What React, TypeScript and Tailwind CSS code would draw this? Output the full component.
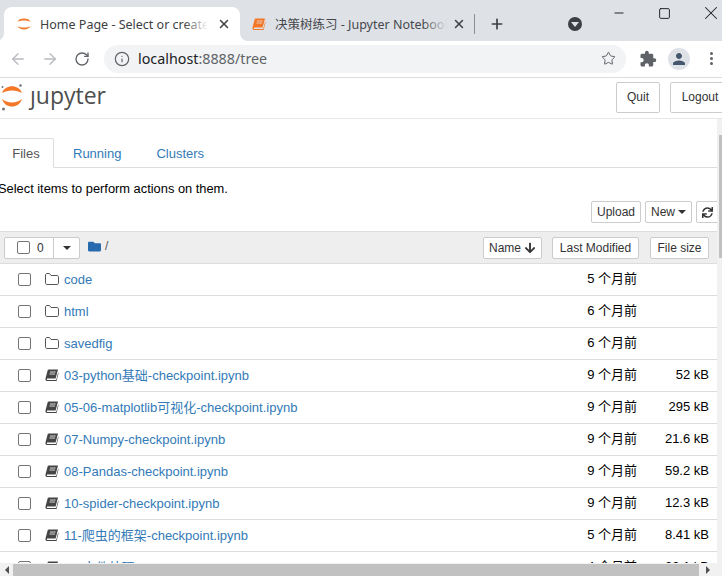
import React from 'react'
import { ArrowLeft, ArrowRight, RotateCw, Info, Star, X, Plus, Minus, Square } from 'lucide-react'
import { FaFolder, FaArrowDown, FaSync } from 'react-icons/fa'
import { MdExtension, MdPerson } from 'react-icons/md'

const CJK = "font-['Liberation_Sans','Noto_Sans_CJK_SC',sans-serif]"

type Row = { name: string, date: string, size?: string, folder?: boolean }

const rows: Row[] = [
    { name: 'code', date: '5 个月前', folder: true },
    { name: 'html', date: '6 个月前', folder: true },
    { name: 'savedfig', date: '6 个月前', folder: true },
    { name: '03-python基础-checkpoint.ipynb', date: '9 个月前', size: '52 kB' },
    { name: '05-06-matplotlib可视化-checkpoint.ipynb', date: '9 个月前', size: '295 kB' },
    { name: '07-Numpy-checkpoint.ipynb', date: '9 个月前', size: '21.6 kB' },
    { name: '08-Pandas-checkpoint.ipynb', date: '9 个月前', size: '59.2 kB' },
    { name: '10-spider-checkpoint.ipynb', date: '9 个月前', size: '12.3 kB' },
    { name: '11-爬虫的框架-checkpoint.ipynb', date: '5 个月前', size: '8.41 kB' },
    { name: '12-文件处理.ipynb', date: '4 个月前', size: '23.1 kB' },
]

function Favicon() {
    return (
        <svg width="16" height="16" viewBox="0 0 24 24" className="shrink-0">
            <path d="M2 9C5 2 19 2 22 9C18 6 6 6 2 9Z" fill="#f37726" />
            <path d="M2 15C5 22 19 22 22 15C18 18 6 18 2 15Z" fill="#f37726" />
        </svg>
    )
}

function NotebookIcon({ color = '#444', pageColor = '#fff' }: { color?: string, pageColor?: string }) {
    return (
        <svg width="14" height="13" viewBox="0 0 14 13" className="shrink-0">
            <path d="M3.6 0.5H13L10.6 9.6H2.4C1.6 9.6 1.5 10.9 2.3 10.9H11.2L13.2 3.4L13.6 4L11.6 11.9H2C0.7 11.9 0.2 10.7 0.5 9.4L2.6 1.6C2.8 0.9 3.1 0.5 3.6 0.5Z" fill={color} />
            <path d="M5 3H10.6M4.5 5H10" stroke={pageColor} strokeWidth="0.8" />
        </svg>
    )
}

function FolderIcon() {
    return (
        <svg width="14" height="12" viewBox="0 0 14 12" fill="none" stroke="#555" strokeWidth="1" className="mb-[2px]">
            <path d="M0.5 2C0.5 1.2 1 0.5 2 0.5H4.5L6 2.5H12C13 2.5 13.5 3.2 13.5 4V10C13.5 10.8 13 11.5 12 11.5H2C1 11.5 0.5 10.8 0.5 10Z" />
        </svg>
    )
}

function Btn({ children, className }: { children: React.ReactNode, className: string }) {
    return (
        <div className={`flex items-center justify-center bg-white border border-[#ccc] rounded-[2px] text-[12px] text-[#333] shrink-0 ${className}`}>
            {children}
        </div>
    )
}

function Tabstrip() {
    return (
        <div className="h-[41px] bg-[#dee1e6] flex items-end shrink-0 overflow-hidden font-['Noto_Sans','Noto_Sans_CJK_SC',sans-serif] text-[12.5px]">
            <div className="relative ml-[4px] w-[236px] h-[34px] shrink-0 bg-white rounded-t-[8px] flex items-center pl-[12px] text-[#3c4043]">
                <svg width="8" height="8" viewBox="0 0 8 8" className="absolute left-[-8px] bottom-0">
                    <path d="M8 0V8H0C4.4 8 8 4.4 8 0Z" fill="#fff" />
                </svg>
                <Favicon />
                <div className="relative ml-[8px] w-[168px] shrink-0 pt-[2px] overflow-hidden whitespace-nowrap">
                    Home Page - Select or create a notebook
                    <div className="absolute right-0 top-0 bottom-0 w-[24px] bg-gradient-to-r from-transparent to-white" />
                </div>
                <X size={14} strokeWidth={2.5} className="ml-[9px] shrink-0 text-[#3c4043]" />
                <svg width="8" height="8" viewBox="0 0 8 8" className="absolute right-[-8px] bottom-0">
                    <path d="M0 0V8H8C3.6 8 0 4.4 0 0Z" fill="#fff" />
                </svg>
            </div>
            <div className="w-[235px] h-[34px] shrink-0 flex items-center pl-[12px] text-[#45484c]">
                <NotebookIcon color="#f37726" pageColor="#dee1e6" />
                <div className="relative ml-[9px] w-[172px] shrink-0 pt-[2px] overflow-hidden whitespace-nowrap">
                    决策树练习 - Jupyter Notebook
                    <div className="absolute right-0 top-0 bottom-0 w-[24px] bg-gradient-to-r from-transparent to-[#dee1e6]" />
                </div>
                <X size={14} strokeWidth={2.5} className="ml-[5px] shrink-0 text-[#3c4043]" />
                <div className="ml-[8px] w-px h-[20px] shrink-0 bg-[#8a8d91]" />
            </div>
            <div className="h-[34px] flex items-center ml-[14px] shrink-0">
                <Plus size={16} strokeWidth={2.5} className="text-[#3c4043]" />
            </div>
            <div className="h-[34px] flex items-center ml-[63px] shrink-0">
                <div className="w-[14px] h-[14px] rounded-full bg-[#3c4043] flex items-center justify-center">
                    <div className="w-0 h-0 border-x-[4px] border-x-transparent border-t-[5px] border-t-[#dee1e6] mt-[1px]" />
                </div>
            </div>
            <div className="self-start flex items-center h-[26px] ml-[30px] shrink-0 text-[#222]">
                <Minus size={14} strokeWidth={1.7} className="shrink-0" />
                <Square size={13} strokeWidth={1.8} className="ml-[32px] shrink-0" />
                <X size={22} strokeWidth={1.1} className="ml-[29px] shrink-0" />
            </div>
        </div>
    )
}

function Toolbar() {
    return (
        <div className="h-[37px] bg-white border-b border-[#dadce0] flex items-center shrink-0 pb-[1px]">
            <ArrowLeft size={18} strokeWidth={1.8} className="ml-[9px] shrink-0 text-[#b9bbbe]" />
            <ArrowRight size={18} strokeWidth={1.8} className="ml-[14px] shrink-0 text-[#b9bbbe]" />
            <RotateCw size={16} strokeWidth={2} className="ml-[15px] shrink-0 text-[#5f6368]" />
            <div className="ml-[14px] w-[522px] h-[28px] shrink-0 rounded-full bg-[#f1f3f4] flex items-center pl-[10px] pr-[10px] font-['Noto_Sans',sans-serif] text-[14.3px]">
                <Info size={16} strokeWidth={1.8} className="text-[#5f6368]" />
                <span className="ml-[8px] text-[#202124]">localhost</span>
                <span className="text-[#5f6368]">:8888/tree</span>
                <Star size={15} strokeWidth={1.6} className="ml-auto text-[#5f6368]" />
            </div>
            <MdExtension size={18} className="ml-[13px] shrink-0 text-[#5f6368]" />
            <div className="ml-[11px] w-[22px] h-[22px] shrink-0 rounded-full bg-[#dee1e6] flex items-center justify-center">
                <MdPerson size={18} className="text-[#45576d]" />
            </div>
            <div className="ml-[20px] shrink-0 flex flex-col gap-[2px]">
                <div className="w-[3px] h-[3px] rounded-full bg-[#5f6368]" />
                <div className="w-[3px] h-[3px] rounded-full bg-[#5f6368]" />
                <div className="w-[3px] h-[3px] rounded-full bg-[#5f6368]" />
            </div>
        </div>
    )
}

function Header() {
    return (
        <div className={`h-[41px] shrink-0 border-b border-[#e7e7e7] flex items-center overflow-hidden bg-white ${CJK}`}>
            <svg width="24" height="28" viewBox="0 0 24 28" className="shrink-0 ml-[1px]">
                <path d="M1 9C4 0 18 0 21 9C16 5.5 6 5.5 1 9Z" fill="#f37726" />
                <path d="M1 15C4 25 18 25 21 15C16 19.5 6 19.5 1 15Z" fill="#f37726" />
                <circle cx="19.5" cy="1.5" r="1.3" fill="#767677" />
                <circle cx="1.5" cy="3" r="1" fill="#767677" />
                <circle cx="2.5" cy="25" r="1.5" fill="#767677" />
            </svg>
            <span className="ml-[5px] font-['Open_Sans',sans-serif] text-[23px] leading-none text-[#4e4e4e] mb-[5px]">ȷupyter</span>
            <Btn className="ml-auto w-[44px] h-[31px] mb-[2px]">Quit</Btn>
            <Btn className="ml-[10px] w-[60px] h-[31px] mb-[2px] mr-[-8px]">Logout</Btn>
        </div>
    )
}

function FileRow({ row }: { row: Row }) {
    return (
        <div className="h-[32px] shrink-0 border-b border-[#ddd] flex items-center text-[13px]">
            <div className="ml-[18px] w-[13px] h-[13px] rounded-[2px] border border-[#767676] bg-white shrink-0" />
            <div className="ml-[14px] w-[19px] shrink-0 flex items-center">
                {row.folder ? <FolderIcon /> : <NotebookIcon />}
            </div>
            <span className="text-[#337ab7] whitespace-nowrap">{row.name}</span>
            <span className="ml-auto mb-[2px] text-black whitespace-nowrap">{row.date}</span>
            <span className="w-[72px] mr-[8px] mb-[2px] text-right text-black whitespace-nowrap">{row.size}</span>
        </div>
    )
}

function FileList() {
    return (
        <div className={`flex-1 min-w-0 overflow-hidden bg-white ${CJK} text-[13px] text-black`}>
            <div className="h-[49px] flex items-end border-b border-[#ddd]">
                <div className="ml-[-2px] w-[56px] h-[30px] mb-[-1px] pt-[1px] bg-white border border-[#ddd] border-b-white rounded-t-[2px] flex items-center justify-center text-[#555] z-10">Files</div>
                <div className="ml-[19px] h-[29px] pt-[2px] flex items-center text-[#337ab7]">Running</div>
                <div className="ml-[35px] h-[29px] pt-[2px] flex items-center text-[#337ab7]">Clusters</div>
            </div>
            <div className="h-[63px] pt-[12px]">
                <div className="ml-[-2px] leading-[18px] text-[12.85px] whitespace-nowrap">Select items to perform actions on them.</div>
                <div className="flex mt-[3px] mr-[-2px]">
                    <Btn className="ml-auto w-[50px] h-[22px]">Upload</Btn>
                    <Btn className="ml-[4px] w-[47px] h-[22px] gap-[3px]">New<span className="w-0 h-0 border-x-[4px] border-x-transparent border-t-[4px] border-t-[#333]" /></Btn>
                    <Btn className="ml-[4px] w-[23px] h-[22px]"><FaSync size={11} /></Btn>
                </div>
            </div>
            <div className="h-[33px] bg-[#eee] border-y border-[#ddd] flex items-center">
                <div className="ml-[4px] w-[76px] h-[22px] flex bg-white border border-[#ccc] rounded-[2px]">
                    <div className="w-[49px] flex items-center border-r border-[#ccc]">
                        <div className="ml-[12px] w-[13px] h-[13px] rounded-[2px] border border-[#767676]" />
                        <span className="ml-[7px] text-[12px] text-[#333]">0</span>
                    </div>
                    <div className="flex-1 flex items-center justify-center">
                        <span className="w-0 h-0 border-x-[4px] border-x-transparent border-t-[4px] border-t-[#333] mt-[1px]" />
                    </div>
                </div>
                <FaFolder size={13} className="ml-[8px] text-[#286aae] mb-[3px]" />
                <span className="ml-[4px] text-[#555] text-[12px] mb-[3px]">/</span>
                <Btn className="ml-auto w-[59px] h-[22px] gap-[3px]">Name<FaArrowDown size={12} /></Btn>
                <Btn className="ml-[10px] w-[87px] h-[22px]">Last Modified</Btn>
                <Btn className="ml-[11px] mr-[8px] w-[59px] h-[22px]">File size</Btn>
            </div>
            {rows.map((row) => <FileRow key={row.name} row={row} />)}
        </div>
    )
}

export default function App() {
    return (
        <div className="w-[722px] h-[576px] flex flex-col overflow-hidden bg-white">
            <Tabstrip />
            <Toolbar />
            <Header />
            <div className="flex-1 min-h-0 flex">
                <FileList />
                <div className="w-[5px] bg-[#f1f1f1] shrink-0 pt-[16px] flex flex-col items-end">
                    <div className="w-[3px] h-[123px] bg-[#c1c1c1]" />
                </div>
            </div>
            <div className="h-[13px] shrink-0 bg-[#f1f1f1] pt-[1px] flex items-center">
                <div className="w-[13px] shrink-0 flex justify-center">
                    <span className="w-0 h-0 border-y-[4px] border-y-transparent border-r-[4px] border-r-[#505050]" />
                </div>
                <div className="flex-1 h-full bg-[#c1c1c1]" />
                <div className="w-[23px] shrink-0 flex justify-center pr-[5px]">
                    <span className="w-0 h-0 border-y-[4px] border-y-transparent border-l-[4px] border-l-[#505050]" />
                </div>
            </div>
        </div>
    )
}
